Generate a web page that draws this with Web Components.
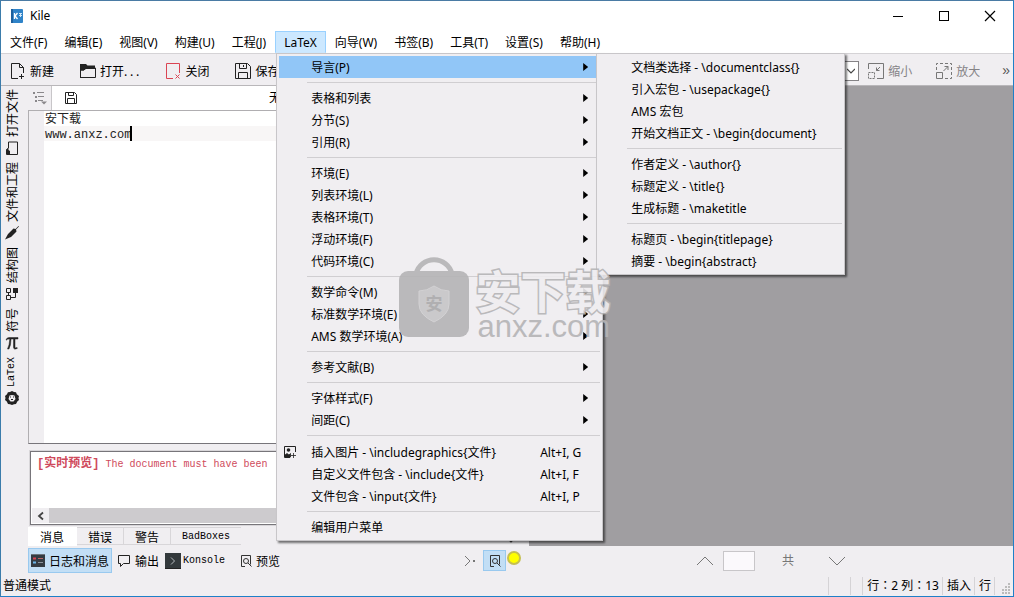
<!DOCTYPE html>
<html lang="zh-CN">
<head>
<meta charset="utf-8">
<title>Kile</title>
<style>
  html, body { margin: 0; height: 100%; }
  body { font: 12px/16px "Noto Sans", "Noto Sans CJK SC", sans-serif; color: #000; background: #f0eef1; overflow: hidden; }
</style>
</head>
<body>
<kile-window></kile-window>

<script>
const define = (name, html, setup) => {
  const template = document.createElement('template');
  template.innerHTML = html;
  customElements.define(name, class extends HTMLElement {
    constructor() {
      super();
      this.attachShadow({ mode: 'open' }).append(template.content.cloneNode(true));
    }
    connectedCallback() { if (setup) setup(this, this.shadowRoot); }
  });
};

const icons = {
  kile: [14, '<rect x="1" width="12" height="14" rx="1" fill="#2f83c8"/><rect x="1" width="2" height="14" fill="#1d5f9c"/><path d="M4.5 4v6M7.5 4L5 7l2.500 3" stroke="#fff" fill="none" stroke-width="1.300"/><path d="M9 4.500h3M9 6.500h3M10.500 4v4" stroke="#cfe6f8" fill="none"/>'],
  min: [12, '<path d="M1 6.500h10" stroke="#000"/>'],
  max: [12, '<rect x="1.500" y="1.500" width="9" height="9" fill="none" stroke="#000"/>'],
  close: [12, '<path d="M1 1l10 10M11 1L1 11" stroke="#000" stroke-width="1.200"/>'],
  fresh: [16, '<path d="M8 15.500H1.500V.5h8l4 4V10M9.500.5v4h4M9 13.500h5M11.500 11v5" fill="none" stroke="#222"/>'],
  open: [16, '<path d="M0 1h6l1.500 1.500H15V6H6L3.500 7.500H1V15H0z" fill="#222"/><path d="M.5 14.500V7H4l2-2h9.500v9.500z" fill="none" stroke="#222"/>'],
  shut: [16, '<path d="M8 15.500H1.500V.5h13V10" fill="none" stroke="#da4453"/><path d="M10.500 11.500l4 4M14.500 11.500l-4 4" stroke="#da4453"/>'],
  save: [16, '<path d="M.5.500h12l3 3v12H.500zM4.500.500v5h7v-5M8.500 2v2M3.500 15.500v-6h9v6" fill="none" stroke="#222"/>'],
  savesmall: [12, '<path d="M.5.500h9l2 2v9H.500zM3.500.500v3h5v-3M2.500 11.500v-5h7v5" fill="none" stroke="#222"/>'],
  zoomout: [16, '<path d="M.5 6V.500h15v15H9" fill="none" stroke="#777"/><path d="M.500 9.500h6v6h-6z" fill="none" stroke="#777" stroke-dasharray="2 1"/><path d="M12 4L8.500 7.500M8.500 4.500v3h3" fill="none" stroke="#777"/>'],
  zoomin: [16, '<path d="M.5 7V.500h15v15H9" fill="none" stroke="#777" stroke-dasharray="3 2"/><path d="M.500 9.500h6v6h-6z" fill="none" stroke="#777"/><path d="M7.500 8L12 3.500M8.500 3.500H12V7" fill="none" stroke="#777"/>'],
  list: [14, '<path d="M0 2h2M2 6h2M2 10h2" stroke="#8a888b" stroke-width="2"/><path d="M4 1.500h7M5 5.500h6M5 9.500h5" stroke="#8a888b"/><path d="M8 10.500h6l-3 3z" fill="#8a888b"/>'],
  folder: [14, '<path d="M.500 12.500v-11h5l1.500 2h6v9z" fill="none" stroke="#222"/><path d="M1 1.500h4.500L7 3.500H5L4 5H1z" fill="#222"/>'],
  pen: [14, '<path d="M0 13.500L3 8 8.500 2.500 10.500 3 13.500 0 14 .5 11 3.500 11.500 5.500 6 11z" fill="#222"/>'],
  tree: [14, '<path d="M1.500 1.500h4v4h-4zM8.500 1.500h4v4h-4zM5.500 3.500h3M3.500 5.500v5h5" fill="none" stroke="#222"/><path d="M8 8h5v5H8z" fill="#222"/>'],
  pi: [14, '<path d="M1 4Q1.500 1.500 4 1.500h9v1.500h-3V11q0 1.500 2 .5l.5.700Q8.500 14.500 8.500 11V3H6Q6 9 4 13H2.500Q4.500 9 4.800 3 2 2.700 1.700 4z" fill="#222" stroke="#222" stroke-width=".5"/>'],
  lion: [14, '<path d="M7 0l2 1 2 .3.800 2L14 5l-.500 2 .5 2-1.700 1.500L11 13l-2 .2L7 14l-2-.8L3 13l-1.200-2.500L0 9l.500-2L0 5l2-1.700.900-2L5 1z" fill="#222"/><path d="M4.500 4.500L7 4l2.500.500L10.500 8 8.500 10.500h-3L3.500 8z" fill="#f0eef1"/><path d="M5 6h1M8 6h1M6 8.500h2" stroke="#222"/>'],
  picture: [12, '<path d="M6 11.500H.500V.500h11V6" fill="none" stroke="#222"/><circle cx="4.500" cy="4" r="1.800" fill="#222"/><path d="M1 11V9l2-1.500L5 9l1.500-1.500V11zM7 9.500h5M9.500 7v5" fill="#222" stroke="#222" stroke-width=".8"/>'],
  log: [14, '<path d="M0 0h14v13H0z" fill="#343b42"/><path d="M0 .500h14" stroke="#6c747c"/><path d="M2 4.500h3" stroke="#da4453" stroke-width="2"/><path d="M7 4.500h5" stroke="#b66"/><path d="M2 8.500h3" stroke="#6bb5e8" stroke-width="2"/><path d="M7 8.500h5" stroke="#8c949c"/>'],
  speech: [14, '<path d="M1.500 1.500h11v8h-6l-3 3v-3h-2z" fill="none" stroke="#222"/>'],
  konsole: [16, '<path d="M0 0h16v16H0z" fill="#33393c"/><path d="M0 15.500h16" stroke="#222"/><path d="M6 4.500L9.500 8 6 11.500" fill="none" stroke="#b5babd"/>'],
  preview: [12, '<path d="M5 11.500H1.500V.500h9v9" fill="none" stroke="#333"/><circle cx="6" cy="6" r="2.500" fill="none" stroke="#333"/><path d="M8 8l3.500 3.500" stroke="#333"/>'],
  next: [12, '<path d="M1 1l5 5-5 5" fill="none" stroke="#777"/><path d="M9 6h2" stroke="#777" stroke-width="2"/>'],
  left: [10, '<path d="M7 1.500L3 5l4 3.500" fill="none" stroke="#444" stroke-width="1.800"/>'],
  up: [18, '<path d="M1 13L9 5l8 8" fill="none" stroke="#777"/>'],
  down: [18, '<path d="M1 5l8 8 8-8" fill="none" stroke="#777"/>'],
  small: [8, '<path d="M0 2l4 4 4-4" fill="none" stroke="#444" stroke-width="1.200"/>'],
  grip: [12, '<path d="M8 2h2M5 5h2M8 5h2M2 8h2M5 8h2M8 8h2M2 11h2M5 11h2M8 11h2" transform="translate(0 -1)" stroke="#bbb" stroke-width="2"/>']
};

define('app-icon', '<style>:host{display:block;flex:none;line-height:0}svg{display:block}</style>', (el, root) => {
  if (root.querySelector('svg')) return;
  const [size, shape] = icons[el.getAttribute('name')];
  root.innerHTML += `<svg width="${size}" height="${size}" viewBox="0 0 ${size} ${size}" aria-hidden="true">${shape}</svg>`;
});

define('title-bar', `
<style>
  :host { display: flex; align-items: center; height: 30px; background: #fff; padding-left: 9px; }
  span { flex: 1; padding-left: 6px; }
  button { width: 46px; height: 30px; border: 0; padding: 0; background: none; display: grid; place-items: center; margin: 0; }
</style>
<app-icon name="kile"></app-icon><span>Kile</span>
<button aria-label="最小化"><app-icon name="min"></app-icon></button>
<button aria-label="最大化"><app-icon name="max"></app-icon></button>
<button aria-label="关闭窗口"><app-icon name="close"></app-icon></button>`);

define('menu-title', `
<style>
  :host { display: block; position: relative; }
  button { font: inherit; color: inherit; height: 22px; padding: 2px 7px 0; border: 1px solid transparent; background: none; white-space: nowrap; display: block; }
  :host([open]) button { background: #cce8ff; border-color: #99d1ff; border-bottom-color: #cce8ff; padding: 2px 8px 0; }
</style>
<button><slot></slot></button><slot name="popup"></slot>`);

define('menu-popup', `
<style>
  :host { display: block; box-sizing: border-box; position: absolute; z-index: 10; min-width: 327px; padding: 2px; border: 1px solid #c8c6c9; background: #f0eef1; box-shadow: 2px 2px 2px #0008; }
  :host([slot=submenu]) { min-width: 249px; }
</style><slot></slot>`);

define('menu-rule', `<style>:host{display:block;height:1px;margin:4px 0 4px 28px;background:#d0ced1}</style>`);

define('menu-entry', `
<style>
  :host { display: block; position: relative; }
  button { font: inherit; color: inherit; width: 100%; min-height: 22px; padding: 2px 12px 0 0; border: 0; background: none; display: grid; grid-template-columns: 32px 1fr auto; align-items: center; text-align: left; white-space: nowrap; }
  :host([active]) button { background: #91c6f7; }
  ::slotted(app-icon) { margin: 4px 0 5px 5px; }
  kbd { font: inherit; width: 48px; }
  i { width: 5px; height: 8px; margin-bottom: 2px; background: #000; clip-path: polygon(0 0, 100% 50%, 0 100%); }
  i, kbd { display: none; }
  :host([more]) i, :host([keys]) kbd { display: block; }
  ::slotted(menu-popup) { left: calc(100% - 4px); top: -3px; }
</style>
<button><span><slot name="icon"></slot></span><span><slot></slot></span><span><kbd></kbd><i></i></span></button><slot name="submenu"></slot>`,
(el, root) => { root.querySelector('kbd').textContent = el.getAttribute('keys') || ''; });

define('latex-menu', `
<style>:host{display:block;position:absolute;z-index:10}</style>
<menu-popup>
  <menu-entry more active>导言(P)
    <menu-popup slot="submenu">
      <menu-entry>文档类选择 - \\documentclass{}</menu-entry>
      <menu-entry>引入宏包 - \\usepackage{}</menu-entry>
      <menu-entry>AMS 宏包</menu-entry>
      <menu-entry>开始文档正文 - \\begin{document}</menu-entry>
      <menu-rule></menu-rule>
      <menu-entry>作者定义 - \\author{}</menu-entry>
      <menu-entry>标题定义 - \\title{}</menu-entry>
      <menu-entry>生成标题 - \\maketitle</menu-entry>
      <menu-rule></menu-rule>
      <menu-entry>标题页 - \\begin{titlepage}</menu-entry>
      <menu-entry>摘要 - \\begin{abstract}</menu-entry>
    </menu-popup>
  </menu-entry>
  <menu-rule></menu-rule>
  <menu-entry more>表格和列表</menu-entry>
  <menu-entry more>分节(S)</menu-entry>
  <menu-entry more>引用(R)</menu-entry>
  <menu-rule></menu-rule>
  <menu-entry more>环境(E)</menu-entry>
  <menu-entry more>列表环境(L)</menu-entry>
  <menu-entry more>表格环境(T)</menu-entry>
  <menu-entry more>浮动环境(F)</menu-entry>
  <menu-entry more>代码环境(C)</menu-entry>
  <menu-rule></menu-rule>
  <menu-entry more>数学命令(M)</menu-entry>
  <menu-entry more>标准数学环境(E)</menu-entry>
  <menu-entry more>AMS 数学环境(A)</menu-entry>
  <menu-rule></menu-rule>
  <menu-entry more>参考文献(B)</menu-entry>
  <menu-rule></menu-rule>
  <menu-entry more>字体样式(F)</menu-entry>
  <menu-entry more>间距(C)</menu-entry>
  <menu-rule></menu-rule>
  <menu-entry keys="Alt+I, G"><app-icon slot="icon" name="picture"></app-icon>插入图片 - \\includegraphics{文件}</menu-entry>
  <menu-entry keys="Alt+I, F">自定义文件包含 - \\include{文件}</menu-entry>
  <menu-entry keys="Alt+I, P">文件包含 - \\input{文件}</menu-entry>
  <menu-rule></menu-rule>
  <menu-entry>编辑用户菜单</menu-entry>
</menu-popup>`);

define('menu-bar', `
<style>
  :host { display: flex; gap: 1px; padding-left: 1px; background: #fff; border-bottom: 1px solid #d5d3d6; }
  latex-menu { left: 1px; top: 100%; }
</style>
<menu-title>文件(F)</menu-title><menu-title>编辑(E)</menu-title><menu-title>视图(V)</menu-title><menu-title>构建(U)</menu-title><menu-title>工程(J)</menu-title>
<menu-title open>LaTeX<latex-menu slot="popup"></latex-menu></menu-title>
<menu-title>向导(W)</menu-title><menu-title>书签(B)</menu-title><menu-title>工具(T)</menu-title><menu-title>设置(S)</menu-title><menu-title>帮助(H)</menu-title>`);

define('tool-button', `
<style>
  :host { display: block; }
  button { font: 12px/16px "Noto Sans CJK SC", sans-serif; color: inherit; border: 1px solid transparent; background: none; padding: 0 2px; height: 25px; display: flex; align-items: center; gap: 4px; white-space: nowrap; }
  :host([pressed]) button { background: #c2def5; border-color: #99c9ef; }
  :host([mono]) button { font: 10px/16px "Liberation Mono", monospace; gap: 2px; }
</style>
<button><slot name="icon"></slot><span><slot></slot></span></button>`);

define('tool-bar', `
<style>
  :host { display: flex; align-items: center; justify-content: space-between; height: 29px; padding: 2px 3px 0 6px; border-bottom: 1px solid #b9b7ba; }
  div { display: flex; align-items: center; }
  .left { gap: 20px; }
  .right { color: #858386; gap: 2px; }
  .zoom { gap: 18px; }
  label { display: flex; align-items: center; position: relative; }
  select { appearance: none; width: 90px; height: 20px; border: 1px solid #858386; border-radius: 0; background: #fff; margin-right: 4px; }
  label app-icon { position: absolute; right: 8px; }
  .more { font: 14px/16px "Liberation Sans", sans-serif; color: #555; border: 0; background: none; padding: 0 0 2px 17px; }
</style>
<div class="left">
  <tool-button><app-icon slot="icon" name="fresh"></app-icon>新建</tool-button>
  <tool-button><app-icon slot="icon" name="open"></app-icon>打开. . .</tool-button>
  <tool-button><app-icon slot="icon" name="shut"></app-icon>关闭</tool-button>
  <tool-button><app-icon slot="icon" name="save"></app-icon>保存</tool-button>
</div>
<div class="right">
  <label><select aria-label="缩放"><option></option></select><app-icon name="small"></app-icon></label>
  <div class="zoom">
    <tool-button><app-icon slot="icon" name="zoomout"></app-icon>缩小</tool-button>
    <tool-button><app-icon slot="icon" name="zoomin"></app-icon>放大</tool-button>
  </div>
  <button class="more" aria-label="更多">»</button>
</div>`);

define('side-tab', `
<style>
  :host { display: block; }
  button { font: 12px/16px "Noto Sans CJK SC", sans-serif; color: inherit; border: 0; background: none; padding: 0; width: 22px; display: flex; flex-direction: column; align-items: center; gap: 4px; }
  span { writing-mode: vertical-rl; text-orientation: sideways; transform: rotate(180deg); white-space: nowrap; }
  :host([mono]) span { font: 10px/16px "Liberation Mono", monospace; }
  ::slotted(app-icon) { transform: rotate(-90deg); }
  :host([upright]) ::slotted(app-icon) { transform: none; }
</style>
<button><span><slot></slot></span><slot name="icon"></slot></button>`);

define('side-bar', `
<style>:host { display: flex; flex-direction: column; gap: 7px; box-sizing: border-box; width: 27px; padding-top: 3px; }</style>
<side-tab>打开文件<app-icon slot="icon" name="folder"></app-icon></side-tab>
<side-tab upright>文件和工程<app-icon slot="icon" name="pen"></app-icon></side-tab>
<side-tab>结构图<app-icon slot="icon" name="tree"></app-icon></side-tab>
<side-tab upright>符号<app-icon slot="icon" name="pi"></app-icon></side-tab>
<side-tab mono upright>LaTeX<app-icon slot="icon" name="lion"></app-icon></side-tab>`);

define('document-editor', `
<style>
  :host { display: flex; flex-direction: column; min-height: 0; }
  header { display: flex; height: 24px; align-items: stretch; }
  .list { border: 0; border-right: 1px solid #c8c6c9; background: none; width: 24px; padding: 0; display: grid; place-items: center; }
  .doc { flex: 1; background: #fff; display: flex; align-items: center; padding-left: 13px; }
  .doc span { flex: 1; text-align: center; padding-right: 32px; }
  .page { flex: 1; display: flex; border: 1px solid #b0aeb1; border-bottom-color: #77757a; min-height: 0; }
  .gutter { width: 15px; }
  .text { flex: 1; position: relative; background: linear-gradient(#f8f6f6, #f8f6f6) 0 15px / 100% 15px no-repeat #fff; font: 12px/15px "Liberation Mono", "Noto Sans CJK SC", monospace; }
  textarea { display: block; box-sizing: border-box; width: 100%; height: 100%; border: 0; padding: 2px 1px; margin: 0; font: inherit; color: #222; background: none; resize: none; outline: 0; overflow: hidden; }
  .caret { position: absolute; left: 12ch; top: 15px; width: 2px; height: 15px; background: #000; }
</style>
<header><button class="list" aria-label="文档列表"><app-icon name="list"></app-icon></button><div class="doc"><app-icon name="savesmall"></app-icon><span>无标题</span></div></header>
<div class="page"><div class="gutter"></div><div class="text"><textarea aria-label="文档" spellcheck="false">安下载
www.anxz.com</textarea><div class="caret"></div></div></div>`);

define('message-panel', `
<style>
  :host { display: block; font: 12px/16px "Noto Sans CJK SC", sans-serif; }
  .log { margin: 7px 2px 1px; border: 1px solid #77757a; outline: 1px solid #d8d6d9; background: #fff; height: 74px; display: flex; flex-direction: column; justify-content: space-between; box-sizing: border-box; }
  p { margin: 4px 6px; color: #cf4a5c; font: 10px/16px "Liberation Mono", monospace; white-space: nowrap; }
  b { font: bold 12px/16px "Liberation Mono", "Noto Sans CJK SC", monospace; }
  .scroll { display: flex; height: 15px; margin: 0 1px 1px; }
  .scroll button { width: 17px; border: 0; padding: 0; background: #f0eef1; display: grid; place-items: center; }
  .thumb { flex: 1; background: #cdcbce; }
  nav { display: flex; align-items: flex-start; margin-top: 2px; }
  nav button { font: inherit; color: inherit; background: none; height: 18px; padding: 1px 11px 0; border: 1px solid #d8d6d9; border-left-width: 0; white-space: nowrap; }
  nav .on { background: #fff; border-color: #fff; padding: 1px 12px 0; height: 19px; }
  nav .mono { font: 10px/16px "Liberation Mono", monospace; border-right: 0; }
  nav span { flex: 1; }
  nav app-icon { padding: 9px 14px 0 0; }
</style>
<div class="log"><p><b>[实时预览]</b> The document must have been</p>
  <div class="scroll"><button aria-label="向左滚动"><app-icon name="left"></app-icon></button><div class="thumb"></div></div></div>
<nav><button class="on">消息</button><button>错误</button><button>警告</button><button class="mono">BadBoxes</button><span></span><app-icon name="small"></app-icon></nav>`);

define('panel-bar', `
<style>
  :host { display: flex; align-items: center; height: 25px; padding: 2px 0; }
  tool-button:nth-of-type(1) { padding-right: 2px; }
  tool-button:nth-of-type(3) { padding-right: 9px; }
  .end { margin-left: auto; padding-right: 8px; display: flex; align-items: center; gap: 1px; }
  .end button { border: 0; background: none; padding: 0 6px 0 0; }
  .end .on { width: 23px; height: 21px; border: 1px solid #99c9ef; background: #c2def5; display: grid; place-items: center; padding: 0; }
  .lamp { width: 14px; height: 14px; box-sizing: border-box; border: 2px solid #c5bf50; border-radius: 50%; background: #ff0; margin-bottom: 6px; }
</style>
<tool-button pressed><app-icon slot="icon" name="log"></app-icon>日志和消息</tool-button>
<tool-button><app-icon slot="icon" name="speech"></app-icon>输出</tool-button>
<tool-button mono><app-icon slot="icon" name="konsole"></app-icon>Konsole</tool-button>
<tool-button><app-icon slot="icon" name="preview"></app-icon>预览</tool-button>
<div class="end"><button aria-label="下一个"><app-icon name="next"></app-icon></button><button class="on" aria-label="实时预览"><app-icon name="preview"></app-icon></button><div class="lamp"></div></div>`);

define('document-preview', `
<style>
  :host { display: flex; flex-direction: column; }
  .canvas { flex: 1; background: #a09ea1; }
  .pager { height: 29px; display: flex; align-items: center; padding-left: 167px; color: #777; }
  button { border: 0; background: none; padding: 0; }
  input { box-sizing: border-box; width: 32px; height: 20px; border: 1px solid #c8c6c9; background: #fbf9fc; margin: 0 27px 0 9px; padding: 0; }
  span { width: 46px; }
</style>
<div class="canvas"></div>
<div class="pager"><button aria-label="上一页"><app-icon name="up"></app-icon></button><input aria-label="页码"><span>共</span><button aria-label="下一页"><app-icon name="down"></app-icon></button></div>`);

define('status-bar', `
<style>
  :host { display: flex; height: 21px; align-items: center; padding-left: 2px; font-family: "Noto Sans", "Noto Sans CJK SC", sans-serif; white-space: nowrap; }
  .mode { flex: 1; }
  .cell { border-left: 1px solid #d5d3d6; height: 18px; line-height: 18px; padding: 0 3px 0 4px; }
  .place { font-family: "Noto Sans", "Noto Sans CJK TC", sans-serif; }
  .wide { padding: 0 2px 0 19px; }
  .thin { padding: 0 1px 0 10px; }
  .grip { padding: 0 1px 0 5px; display: flex; align-items: end; }
</style>
<span class="mode">普通模式</span><span class="cell wide"></span><span class="cell thin"></span><span class="cell place" lang="zh-TW">行：2 列：13</span><span class="cell">插入</span><span class="cell">行</span><span class="cell grip"><app-icon name="grip"></app-icon></span>`);

define('site-mark', `
<style>
  :host { display: flex; gap: 6px; pointer-events: none; color: #b5b4b6; opacity: .9; }
  .name { display: block; font: bold 45px/42px "Noto Sans CJK SC", sans-serif; color: #efedf0; -webkit-text-stroke: 3px #b5b4b6; paint-order: stroke fill; }
  .site { display: block; font: 31px/32px "Liberation Sans", sans-serif; padding-left: 2px; }
  .words { padding-top: 12px; white-space: nowrap; margin-bottom: -6px; }
</style>
<svg width="70" height="80" viewBox="0 0 70 80" aria-hidden="true">
  <path d="M17 17a18.500 18.500 0 0 1 36 0" fill="none" stroke="#b5b4b6" stroke-width="5"/>
  <rect y="14" width="70" height="66" rx="9" fill="#b5b4b6"/>
  <path d="M35 29q7 5 15 5v13q0 11-15 18-15-7-15-18V34q8 0 15-5z" fill="#c6c5c7" stroke="#d0cfd1"/>
  <text x="35" y="53" text-anchor="middle" font-family="Noto Sans CJK SC" font-weight="700" font-size="17" fill="#aaa9ab">安</text>
</svg>
<div class="words"><span class="name">安下载</span><span class="site">anxz.com</span></div>`);

define('kile-window', `
<style>
  :host { display: flex; flex-direction: column; box-sizing: border-box; height: 100vh; position: relative; border: 1px solid #1e80c8; border-top-color: #4a7ba4; border-left-color: #3b7cab; background: #f0eef1; }
  main { flex: 1; min-height: 0; display: flex; }
  .work { flex: 501 0 0; min-width: 0; display: flex; flex-direction: column; }
  document-editor { flex: 1; }
  document-preview { flex: 484 0 0; min-width: 0; }
  .mark { position: absolute; inset: 0 4px 4px 0; z-index: 20; display: grid; place-items: center; pointer-events: none; }
</style>
<title-bar></title-bar>
<menu-bar></menu-bar>
<tool-bar></tool-bar>
<main>
  <side-bar></side-bar>
  <div class="work"><document-editor></document-editor><message-panel></message-panel><panel-bar></panel-bar></div>
  <document-preview></document-preview>
</main>
<status-bar></status-bar>
<div class="mark"><site-mark></site-mark></div>`);
</script>
</body>
</html>
